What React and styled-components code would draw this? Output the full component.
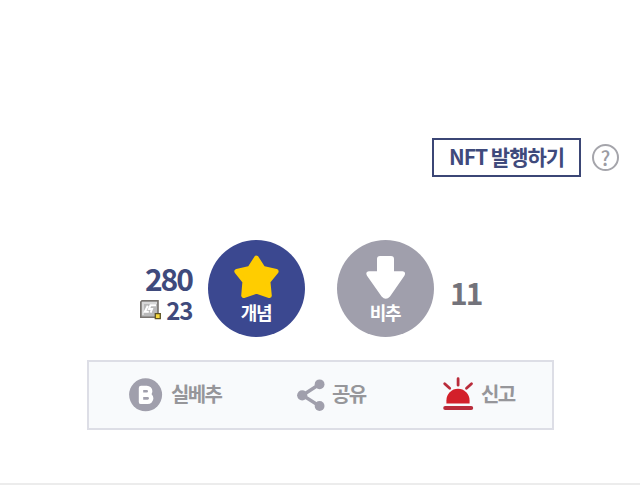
import styled, { createGlobalStyle } from "styled-components";

export default function App() {
  return (
    <Page>
      <GlobalStyle />
      <NftRow>
        <NftButton>NFT 발행하기</NftButton>
        <HelpButton>?</HelpButton>
      </NftRow>
      <VoteRow>
        <UpCount>
          <Count>280</Count>
          <FixedCount>
            <FixedIcon />
            <Count $small>23</Count>
          </FixedCount>
        </UpCount>
        <VoteButton $color="#3b4890">
          <StarIcon />
          <VoteLabel>개념</VoteLabel>
        </VoteButton>
        <VoteButton $color="#a09fac">
          <DownIcon />
          <VoteLabel>비추</VoteLabel>
        </VoteButton>
        <Count $down>11</Count>
      </VoteRow>
      <Tools>
        <Tool $width={168}>
          <BestIcon />
          <ToolText $gap={8}>실베추</ToolText>
        </Tool>
        <Tool $width={146}>
          <ShareIcon />
          <ToolText $gap={7}>공유</ToolText>
        </Tool>
        <Tool>
          <SirenIcon />
          <ToolText $gap={6}>신고</ToolText>
        </Tool>
      </Tools>
      <Bottom />
    </Page>
  );
}

function FixedIcon() {
  return (
    <svg width="22" height="20" viewBox="0 0 22 20">
      <path d="M2 0.8h16v16.4H0.8V2z" fill="#b9b9b9" stroke="#77736f" strokeWidth="1.6" />
      <path d="M2 2h15v2H2zM2 2h2v13H2z" fill="#d8d8d8" />
      <path
        d="M16 5.2h-5.5L9 9h3l-1.4 3.6M7.8 5.8L4.8 11.8h4"
        fill="none"
        stroke="#fff"
        strokeWidth="2"
      />
      <path d="M15.3 13.7h5v5h-5z" fill="#f6d83c" stroke="#5e5323" strokeWidth="1.3" />
    </svg>
  );
}

function StarIcon() {
  return (
    <svg width="46" height="44" viewBox="0 0 46 44">
      <path
        d="M22.4 3L29 13.4L42.2 16.4L34 26.6L35.4 40.6L22.4 36.3L9.6 40.6L10.8 26.6L2.8 16.4L15.8 13.4Z"
        fill="#ffcd00"
        stroke="#ffcd00"
        strokeWidth="4.8"
        strokeLinejoin="round"
      />
    </svg>
  );
}

function DownIcon() {
  return (
    <svg width="46" height="44" viewBox="0 0 46 44">
      <path
        d="M17 1h11q3 0 3 3v12.2h8.5q4 .7 1.9 4.5L27 41.5q-4.2 4.4-8.4 0L4 20.7q-2.1-3.8 1.9-4.5H14V4q0-3 3-3z"
        fill="#fff"
      />
    </svg>
  );
}

function BestIcon() {
  return (
    <svg width="34" height="34" viewBox="0 0 34 34">
      <circle cx="16.6" cy="16.8" r="16.5" fill="#a09fac" />
      <path
        d="M12 9.9h5.8a3.4 3.4 0 0 1 0 6.8H12zM12 16.7h6.6a3.6 3.6 0 0 1 0 7.2H12z"
        fill="none"
        stroke="#fff"
        strokeWidth="4.4"
        strokeLinejoin="round"
      />
    </svg>
  );
}

function ShareIcon() {
  return (
    <svg width="28" height="33" viewBox="0 0 28 33">
      <path d="M22.5 5.3L5.5 16.3L22.5 27" fill="none" stroke="#a09fac" strokeWidth="3.4" />
      <circle cx="22.6" cy="5.3" r="4.9" fill="#a09fac" />
      <circle cx="5.2" cy="16.3" r="5.1" fill="#a09fac" />
      <circle cx="22.6" cy="27" r="4.9" fill="#a09fac" />
    </svg>
  );
}

function SirenIcon() {
  return (
    <svg width="32" height="34" viewBox="0 0 32 34">
      <path d="M3.4 25.6v-3.2a11.6 11.6 0 0 1 23.2 0v3.2z" fill="#d3202a" />
      <path
        d="M15.1 .7v6.5M1.7 5.7l5 4.6M28.5 5.7l-5 4.6"
        fill="none"
        stroke="#b92c3b"
        strokeWidth="2.8"
        strokeLinecap="round"
      />
      <path d="M2.2 30.1h26" stroke="#b92c3b" strokeWidth="4" strokeLinecap="round" />
    </svg>
  );
}

const GlobalStyle = createGlobalStyle`
  * {
    box-sizing: border-box;
  }
  body {
    margin: 0;
    background: #fff;
    font-family: "Noto Sans CJK KR", "Noto Sans", sans-serif;
  }
  svg {
    display: block;
    flex-shrink: 0;
    overflow: visible;
  }
`;
const Page = styled.div`
  width: 640px;
  height: 485px;
  padding-top: 138px;
  display: flex;
  flex-direction: column;
  overflow: hidden;
`;
const NftRow = styled.div`
  display: flex;
  align-items: center;
  justify-content: flex-end;
  gap: 11px;
  height: 39px;
  padding-right: 21px;
`;
const NftButton = styled.button`
  width: 149px;
  height: 39px;
  padding: 0 0 3px;
  border: 2px solid #3b4675;
  background: #fff;
  color: #3f4a7c;
  font-family: inherit;
  font-size: 21px;
  font-weight: bold;
  line-height: 32px;
  letter-spacing: -1px;
  white-space: nowrap;
`;
const HelpButton = styled.button`
  width: 27px;
  height: 27px;
  padding: 0;
  border: 2px solid #a5a5ab;
  border-radius: 50%;
  background: #fff;
  color: #9c9ca2;
  font-family: inherit;
  font-size: 20px;
  font-weight: 500;
  line-height: 20px;
`;
const VoteRow = styled.div`
  display: flex;
  margin-top: 63px;
  height: 97px;
`;
const UpCount = styled.div`
  width: 208px;
  padding: 16px 16px 0 0;
  display: flex;
  flex-direction: column;
  align-items: flex-end;
`;
const Count = styled.span`
  color: ${(props) => (props.$down ? "#73737b" : "#3f4a7c")};
  font-size: ${(props) => (props.$small ? 24 : 30)}px;
  font-weight: bold;
  line-height: ${(props) => (props.$small ? 24 : 44)}px;
  letter-spacing: ${(props) => (props.$small ? -1.3 : -2)}px;
  ${(props) => props.$down && "margin: 30px 0 0 16px;"}
`;
const FixedCount = styled.div`
  display: flex;
  align-items: center;
  gap: 4px;
  margin-top: -2px;
`;
const VoteButton = styled.button`
  width: 97px;
  height: 97px;
  margin-right: 32px;
  padding: 15px 0 0;
  border: none;
  border-radius: 50%;
  background: ${(props) => props.$color};
  display: flex;
  flex-direction: column;
  align-items: center;
  font-family: inherit;

  & + & {
    margin-right: 0;
  }
`;
const VoteLabel = styled.span`
  margin: 1px 1px 0 0;
  color: #fff;
  font-size: 18px;
  font-weight: bold;
  line-height: 24px;
  letter-spacing: -1.2px;
`;
const Tools = styled.div`
  display: flex;
  align-items: center;
  width: 467px;
  height: 70px;
  margin: 23px 0 0 87px;
  padding-left: 40px;
  border: 2px solid #dddee6;
  background: #f8fafc;
`;
const Tool = styled.div`
  display: flex;
  align-items: center;
  width: ${(props) => (props.$width ? `${props.$width}px` : "auto")};
`;
const ToolText = styled.span`
  margin: -3px 0 0 ${(props) => props.$gap}px;
  color: #96969a;
  font-size: 20px;
  font-weight: bold;
  line-height: 28px;
  letter-spacing: -1.6px;
`;
const Bottom = styled.div`
  height: 2px;
  margin-top: 53px;
  background: #ececec;
`;
